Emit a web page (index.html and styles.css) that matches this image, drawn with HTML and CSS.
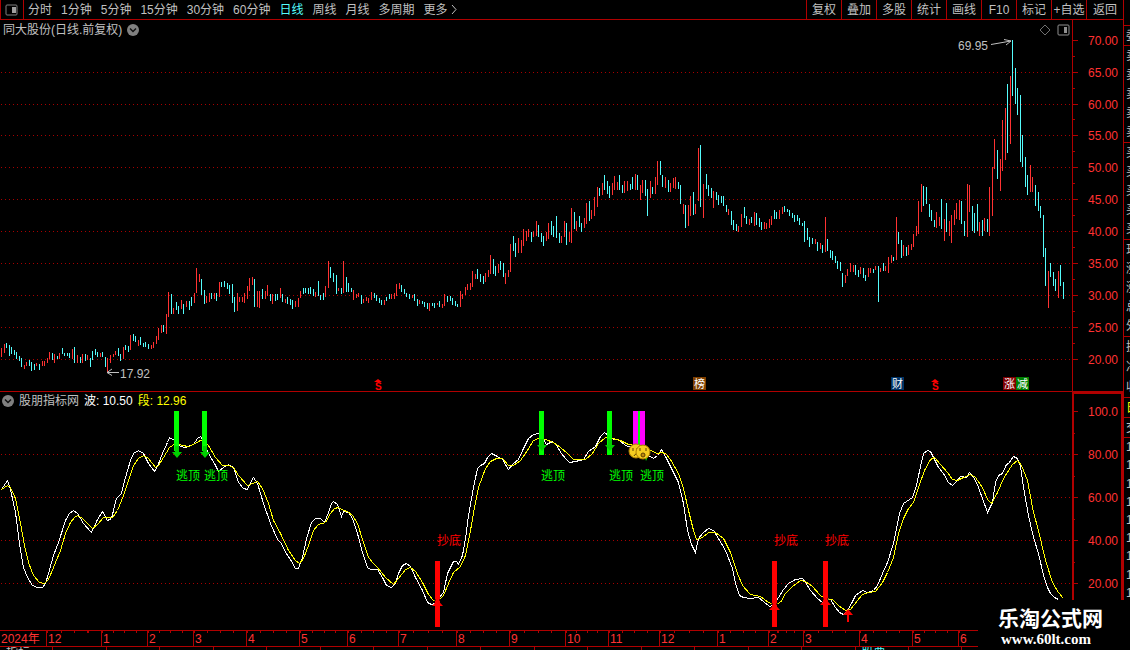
FILE: index.html
```
<!DOCTYPE html>
<html lang="zh-CN">
<head>
    <meta charset="UTF-8">
    <meta name="viewport" content="width=device-width, initial-scale=1.0">
    <title>同大股份 日线</title>
    <link rel="stylesheet" href="styles.css">
</head>
<body>
    <div class="terminal">
        <header class="toolbar">
            <button class="panel-toggle" aria-label="侧栏">
                <svg width="14" height="12" viewBox="0 0 14 12"><rect x="1" y="1" width="11" height="10" rx="1" fill="none" stroke="#808080"/><rect x="7" y="3" width="4" height="6" fill="#a0a0a0"/></svg>
            </button>
            <nav class="periods">
                <button>分时</button>
                <button>1分钟</button>
                <button>5分钟</button>
                <button>15分钟</button>
                <button>30分钟</button>
                <button>60分钟</button>
                <button class="active">日线</button>
                <button>周线</button>
                <button>月线</button>
                <button>多周期</button>
                <button class="more">更多<svg width="6" height="11" viewBox="0 0 6 11"><path d="M1 1l4 4.500-4 4.500" fill="none" stroke="#c0c0c0"/></svg></button>
            </nav>
            <nav class="tools">
                <button>复权</button>
                <button>叠加</button>
                <button>多股</button>
                <button>统计</button>
                <button>画线</button>
                <button>F10</button>
                <button>标记</button>
                <button>+自选</button>
                <button>返回</button>
            </nav>
        </header>

        <!-- Price chart -->
        <section class="pane price-pane">
            <div class="plot">
                <div class="pane-title">
                    <span>同大股份(日线.前复权)</span>
                    <button class="round" aria-label="展开"><svg width="12" height="12" viewBox="0 0 12 12"><circle cx="6" cy="6" r="6" fill="#808080"/><path d="M3 4.500l3 3 3-3" fill="none" stroke="#101010" stroke-width="1.500"/></svg></button>
                </div>
                <div class="pane-icons">
                    <svg width="12" height="12" viewBox="0 0 12 12"><path d="M6 1l5 5-5 5-5-5z" fill="none" stroke="#707070"/></svg>
                    <svg width="13" height="12" viewBox="0 0 13 12"><rect x="1" y="1" width="11" height="10" rx="1" fill="none" stroke="#909090"/><rect x="7" y="3" width="3" height="6" fill="#909090"/></svg>
                </div>
                <svg class="chart" viewBox="0 20 1072 371">
                    <path class="grid" d="M1 72.500H1072M1 104.500H1072M1 135.500H1072M1 167.500H1072M1 199.500H1072M1 231.500H1072M1 263.500H1072M1 295.500H1072M1 327.500H1072M1 359.500H1072"/>
                    <g transform="translate(.5 0)">
                        <path class="up" d="M1 348V357M4 344V353M24 365V369M26 362V366M36 363V366M42 361V366M44 361V366M47 358V363M49 352V359M54 354V363M59 353V359M72 349V359M77 355V363M82 354V363M87 355V360M100 353V357M107 358V372M110 355V363M113 354V357M115 351V355M123 347V359M130 335V350M138 340V346M151 345V349M153 342V348M156 336V344M158 328V340M161 325V333M166 314V334M168 292V317M173 308V314M181 300V309M186 301V307M194 293V303M196 268V293M199 274V282M206 296V303M209 293V302M214 293V299M219 282V297M237 293V311M239 297V302M242 297V302M244 293V303M247 286V299M249 278V291M252 277V285M257 291V307M259 291V308M265 291V299M267 285V296M272 294V304M280 288V298M285 299V303M295 301V307M298 298V307M300 291V298M315 292V297M325 286V297M328 261V288M338 288V291M343 261V293M353 290V300M356 294V298M358 293V297M363 299V303M366 297V301M368 298V303M371 292V300
                            M384 300V305M391 294V299M394 293V299M396 284V296M399 283V289M412 295V298M419 300V304M429 303V311M437 303V305M442 304V308M444 294V306M460 291V307M462 294V299M465 287V295M467 284V290M470 283V290M472 271V287M475 274V279M485 273V282M488 270V277M490 255V274M498 264V273M505 273V284M508 270V277M510 244V272M518 238V253M521 240V253M523 229V246M526 231V241M528 229V237M533 231V237M536 221V236M546 232V241M548 223V239M561 236V243M564 221V237M569 232V242M571 208V243M576 221V231M584 218V228M586 203V224M591 210V219M594 197V216M597 187V207M602 183V195M612 183V195M614 176V190M617 182V190M624 181V193M627 181V191M635 174V190M640 185V200M642 180V193M650 181V198M655 177V194M657 161V185M665 177V188M670 183V192M673 178V188M675 177V189M683 204V214M688 205V226M690 196V216M695 204V214M698 148V201M703 184V218M713 191V208M728 209V215M738 226V232M741 214V227M749 219V225
                            M754 212V226M764 222V229M766 223V229M769 219V228M771 216V225M779 210V219M782 207V214M815 239V244M820 243V249M825 217V252M845 275V283M847 269V276M850 263V272M853 265V272M860 267V274M868 268V277M870 268V273M875 266V270M880 268V272M885 266V271M888 257V273M891 255V263M896 217V260M903 245V256M908 245V255M911 244V250M913 234V247M916 226V236M918 201V234M921 184V212M936 212V228M939 217V226M944 219V241M949 221V236M951 215V243M954 210V225M956 203V219M959 200V220M967 184V237M969 185V212M979 222V236M984 218V231M989 187V236M992 167V216M994 139V169M1000 159V191M1002 120V171M1005 108V160M1010 76V144M1030 165V192M1032 177V192M1048 271V308M1058 271V298"/>
                        <path class="down" d="M6 343V348M9 345V356M11 347V354M14 350V355M16 352V359M19 356V361M21 358V367M29 360V366M31 362V371M34 364V370M39 364V370M52 353V360M57 356V359M62 348V354M64 353V356M67 353V356M69 353V358M74 347V363M80 357V363M85 354V361M90 358V367M92 351V360M95 349V355M97 352V357M102 352V357M105 357V367M118 348V356M120 354V361M125 345V350M128 346V352M133 334V341M135 336V342M140 337V345M143 343V347M145 342V347M148 344V349M163 325V332M171 294V314M176 302V310M178 306V314M183 304V314M189 301V310M191 297V306M201 279V295M204 290V304M211 293V299M216 293V301M221 282V287M224 281V287M227 283V289M229 285V294M232 284V303M234 297V312M254 279V307M262 289V299M270 294V301M275 294V301M277 294V300M282 294V302M287 297V304M290 299V305M292 300V309M303 288V294M305 288V293M308 288V294M310 287V294M313 289V296M318 281V296M320 295V300M323 293V300M330 267V278M333 273V282M336 275V294M341 288V294M346 277V292M348 283V292M351 288V292M361 295V304M374 293V298M376 295V301M379 298V303
                            M381 300V305M386 297V301M389 294V299M401 285V292M404 289V294M406 293V297M409 294V299M414 294V301M417 299V306M422 301V304M424 302V307M427 303V309M432 303V306M434 303V308M439 301V307M447 296V302M450 296V301M452 298V305M455 301V306M457 304V307M477 269V279M480 274V282M483 276V284M493 259V274M495 266V276M500 261V270M503 263V277M513 236V251M515 243V257M531 232V242M538 225V237M541 233V242M543 236V246M551 221V235M553 226V237M556 216V238M559 233V243M566 223V245M574 212V229M579 216V227M581 223V232M589 201V221M599 188V196M604 175V190M607 181V194M609 186V198M619 175V190M622 185V193M630 184V190M632 177V189M637 175V190M645 180V196M647 189V216M652 187V194M660 161V175M662 175V187M668 180V192M678 182V189M680 185V204M685 205V228M693 192V215M700 145V207M706 174V189M708 185V196M711 188V198M716 192V200M718 195V205M721 196V203M723 196V206M726 205V212M731 211V225M733 220V230M736 224V231M744 207V218M746 216V224
                            M751 217V223M756 213V225M759 218V227M761 222V230M774 210V219M776 212V219M784 206V212M787 209V212M789 210V216M792 213V218M794 215V222M797 215V221M799 218V225M802 223V226M804 221V242M807 228V240M809 237V247M812 238V244M817 242V251M822 245V253M827 239V251M830 250V258M832 251V260M835 256V263M837 261V269M840 262V271M842 273V287M855 265V275M858 270V277M863 268V278M865 275V281M873 269V273M878 266V302M883 263V271M893 257V261M898 232V244M901 240V258M906 247V256M923 186V206M926 187V204M929 204V217M931 210V221M934 220V227M941 199V229M946 203V232M961 201V224M964 221V236M972 206V231M974 213V233M977 204V231M982 220V236M987 219V232M997 150V179M1007 84V153M1012 40V96M1015 68V104M1017 88V115M1020 95V162M1022 135V167M1025 157V187M1027 175V195M1035 185V206M1038 192V211M1040 206V218M1043 215V257M1045 248V286M1050 263V277M1053 272V286M1055 279V291M1060 265V286M1063 282V299"/>
                    </g>
                    <path class="pointer" d="M119 372.500H107M112 369l-5 3.500 5 3M991 44.500L1011 41M1004 39.500l7 1.500-5 4"/>
                    <text class="note" x="120" y="378">17.92</text>
                    <text class="note" x="958" y="50">69.95</text>
                    <g class="event">
                        <path d="M374 382l4-3 4 3zM931 382l4-3 4 3z"/>
                        <text x="375" y="390">S</text>
                        <text x="932" y="390">S</text>
                    </g>
                    <g class="badge">
                        <rect x="693" y="377" width="13" height="13" fill="#804000"/>
                        <rect x="891" y="377" width="13" height="13" fill="#003366"/>
                        <rect x="1003" y="377" width="13" height="13" fill="#800000"/>
                        <rect x="1016" y="377" width="13" height="13" fill="#008000"/>
                        <text x="694" y="388">榜</text>
                        <text x="892" y="388">财</text>
                        <text x="1004" y="388">涨</text>
                        <text x="1017" y="388">减</text>
                    </g>
                </svg>
            </div>
            <svg class="scale" viewBox="0 20 51 371">
                <path class="ticks" d="M0 40.500h6M0 72.500h6M0 104.500h6M0 135.500h6M0 167.500h6M0 199.500h6M0 231.500h6M0 263.500h6M0 295.500h6M0 327.500h6M0 359.500h6M0 56.500h3M0 88.500h3M0 119.500h3M0 151.500h3M0 183.500h3M0 215.500h3M0 247.500h3M0 279.500h3M0 311.500h3M0 343.500h3"/>
                <g class="labels">
                    <text x="46" y="45">70.00</text>
                    <text x="46" y="77">65.00</text>
                    <text x="46" y="109">60.00</text>
                    <text x="46" y="140">55.00</text>
                    <text x="46" y="172">50.00</text>
                    <text x="46" y="204">45.00</text>
                    <text x="46" y="236">40.00</text>
                    <text x="46" y="268">35.00</text>
                    <text x="46" y="300">30.00</text>
                    <text x="46" y="332">25.00</text>
                    <text x="46" y="364">20.00</text>
                </g>
            </svg>
        </section>

        <!-- Indicator chart -->
        <section class="pane indicator-pane">
            <div class="plot">
                <div class="pane-title">
                    <button class="round" aria-label="展开"><svg width="12" height="12" viewBox="0 0 12 12"><circle cx="6" cy="6" r="6" fill="#808080"/><path d="M3 4.500l3 3 3-3" fill="none" stroke="#101010" stroke-width="1.500"/></svg></button>
                    <span>股朋指标网</span>
                    <span class="wave">波: 10.50</span>
                    <span class="segment">段: 12.96</span>
                </div>
                <svg class="chart" viewBox="0 392 1072 238">
                    <path class="grid" d="M1 454.500H1072M1 497.500H1072M1 540.500H1072M1 583.500H1072"/>
                    <g transform="translate(.5 .5)">
                        <polyline class="line-wave" points="1,489 7,480 10,489 15,512 19,543 23,567 27,577 32,585 37,587 42,587 45,583 48,573 53,555 58,542 65,520 69,513 73,510 77,513 83,523 91,532 97,519 102,511 107,520 111,518 116,498 121,493 125,477 130,460 133,453 138,450 143,453 148,463 154,471 157,466 162,453 167,442 169,437 174,440 180,446 185,447 193,444 197,438 200,436 203,440 208,453 214,463 218,471 223,467 228,464 233,467 238,482 243,488 247,489 250,482 253,477 257,483 263,503 270,523 277,539 281,543 285,552 290,559 295,568 298,568 302,557 306,538 311,522 315,518 320,518 324,522 328,512 331,503 333,501 337,504 341,516 343,511 348,512 352,518 357,533 362,552 367,567 370,569
                            377,569 382,577 386,585 391,587 395,583 398,573 402,565 406,563 410,566 415,577 422,590 427,602 431,604 435,603 438,598 443,592 447,573 453,561 456,561 458,564 462,555 465,538 468,515 473,487 477,468 480,465 484,463 487,457 491,453 497,456 502,459 508,469 513,463 518,459 523,448 528,438 533,434 538,433 542,437 546,444 552,441 556,445 561,453 565,458 569,462 575,461 583,459 588,451 595,446 600,436 604,432 608,435 613,439 618,439 625,445 632,447 640,450 648,455 653,458 657,455 661,449 665,456 672,470 678,482 683,503 687,530 691,544 695,552 698,538 703,532 708,528 713,530 718,538 725,550 732,568 735,583 739,595 743,597 750,598
                            758,597 763,601 769,606 773,605 778,597 783,589 788,583 795,579 802,578 805,582 810,590 817,598 822,602 826,599 830,599 835,607 839,612 843,614 847,610 852,601 855,595 862,590 867,592 873,590 877,585 882,573 887,562 893,543 896,528 899,513 903,503 912,497 916,485 920,466 923,453 927,450 930,451 933,457 938,467 943,473 948,482 952,485 956,481 960,476 966,477 969,472 974,478 978,487 982,498 987,512 992,502 995,482 998,475 1002,473 1006,464 1008,463 1013,456 1017,458 1020,466 1023,487 1028,515 1033,537 1038,553 1043,575 1047,587 1050,593 1054,597 1058,599"/>
                        <polyline class="line-segment" points="1,489 7,485 10,487 15,498 20,523 24,545 28,562 33,575 39,582 44,583 48,579 53,567 60,550 65,533 70,522 74,517 77,515 82,518 87,523 92,528 97,524 103,517 112,517 117,510 123,495 128,480 133,465 138,458 143,455 148,458 155,467 158,465 163,457 169,447 175,443 182,445 188,446 193,444 200,440 203,439 208,445 215,457 222,465 228,465 233,467 238,475 247,485 252,483 257,481 262,488 268,503 273,520 280,533 288,550 295,560 299,563 303,558 308,545 313,530 318,524 325,522 330,513 334,508 338,507 343,510 347,511 352,515 357,523 363,542 368,557 373,563
                            377,567 385,577 393,584 398,578 405,569 410,567 415,571 422,582 428,594 433,600 438,600 443,595 448,583 453,572 460,566 465,555 470,530 474,507 478,487 485,468 490,461 496,458 502,458 508,465 513,465 520,460 527,450 533,440 540,437 545,439 553,442 560,447 567,453 573,459 585,459 592,453 598,443 605,437 612,438 620,440 628,444 640,446 650,450 657,453 661,452 665,453 670,459 678,473 683,488 688,510 693,530 696,539 702,537 708,532 715,532 723,538 730,552 737,573 742,585 750,594
                            760,596 768,602 774,604 780,602 785,593 792,586 800,580 805,581 812,586 820,595 825,598 832,599 838,605 845,610 850,609 857,600 862,594 868,592 875,591 882,582 887,572 893,557 898,533 903,518 908,508 913,502 918,487 924,470 930,459 934,457 940,464 947,472 952,479 957,480 963,477 970,474 975,477 982,487 987,499 991,503 997,492 1003,478 1012,464 1017,460 1021,465 1027,480 1033,512 1038,530 1045,560 1052,582 1058,592 1063,598"/>
                    </g>
                    <!-- Sell signals -->
                    <g class="sell">
                        <path d="M174 411h5v40h-5zM202 411h5v40h-5zM539 411h5v44h-5zM607 411h5v44h-5z"/>
                        <path class="sell-arrow" d="M175 446h4v6h3l-5 6-5-6h3zM203 446h4v6h3l-5 6-5-6h3zM540 439h4v6h3l-5 6-5-6h3zM608 439h4v6h3l-5 6-5-6h3z"/>
                        <path class="top-bar" d="M633 411h12v34h-12z"/>
                        <path d="M638 411h2v34h-2zM645 457l4-3-3 7z"/>
                        <text x="176" y="480">逃顶</text>
                        <text x="204" y="480">逃顶</text>
                        <text x="541" y="480">逃顶</text>
                        <text x="609" y="480">逃顶</text>
                        <text x="640" y="480">逃顶</text>
                    </g>
                    <g class="face">
                        <circle cx="636" cy="451" r="7"/>
                        <path d="M633 448v3M637 448v3M634 456q2-4 4 0"/>
                        <circle cx="643" cy="452" r="7"/>
                        <path d="M640 448v3M646 448v3"/>
                        <ellipse class="mouth" cx="643" cy="455" rx="2" ry="2"/>
                    </g>
                    <!-- Buy signals -->
                    <g class="buy">
                        <path d="M435 561h5v66h-5zM772 561h5v66h-5zM823 561h5v66h-5z"/>
                        <path d="M432 606l5.500-6 5.500 6zM769 610l5.500-6 5.500 6zM820 605l5.500-6 5.500 6zM843 615l5-6 5 6h-4v7h-2v-7z"/>
                        <path class="notch" d="M434 600h2M439 600h2M771 604h2M776 604h2M822 599h2M827 599h2"/>
                        <text x="437" y="545">抄底</text>
                        <text x="774" y="545">抄底</text>
                        <text x="825" y="545">抄底</text>
                    </g>
                </svg>
            </div>
            <svg class="scale" viewBox="0 392 51 238">
                <path class="ticks" d="M0 411.500h6M0 454.500h6M0 497.500h6M0 540.500h6M0 583.500h6M0 433.500h3M0 476.500h3M0 519.500h3M0 562.500h3"/>
                <path class="frame" d="M1 630V392M0 392.500H51M50 392V630"/>
                <g class="labels">
                    <text x="46" y="416">100.0</text>
                    <text x="46" y="459">80.00</text>
                    <text x="46" y="502">60.00</text>
                    <text x="46" y="545">40.00</text>
                    <text x="46" y="588">20.00</text>
                </g>
            </svg>
        </section>

        <ol class="months">
            <li>2024年</li>
            <li>12</li>
            <li>1</li>
            <li>2</li>
            <li>3</li>
            <li>4</li>
            <li>5</li>
            <li>6</li>
            <li>7</li>
            <li>8</li>
            <li>9</li>
            <li>10</li>
            <li>11</li>
            <li>12</li>
            <li>1</li>
            <li>2</li>
            <li>3</li>
            <li>4</li>
            <li>5</li>
            <li>6</li>
        </ol>
        <!-- Only the top edge of the tab row fits in the window -->
        <div class="tabs">
            <i>指标</i><i></i><i></i><i></i><i></i><i></i><i></i><i></i><i></i><i></i><i></i><i></i><i></i><i></i><i></i><i></i><i class="active">股票</i><i></i><i></i><i></i><i></i>
        </div>
    </div>

    <!-- Quote column, mostly cut off by the window edge -->
    <aside class="quotes">
        <div class="cell head"></div>
        <div class="cell"><span>委</span></div>
        <div class="cell five"><span>卖</span><span>卖</span><span>卖</span><span>卖</span><span>卖</span></div>
        <div class="cell five"><span>买</span><span>买</span><span>买</span><span>买</span><span>买</span></div>
        <div class="cell five"><span>现</span><span>涨</span><span>涨</span><span>总</span><span>外</span></div>
        <div class="cell three"><span>换</span><span>净</span><span>收</span></div>
        <div class="cell yellow"><span>日</span></div>
        <div class="cell"><span>交</span></div>
        <div class="cell trades"><span>1</span><span>1</span><span>1</span><span>1</span><span>1</span><span>1</span><span>1</span><span>1</span><span>1</span></div>
    </aside>

    <div class="site-mark">
        <strong>乐淘公式网</strong>
        <a href="#">www.60lt.com</a>
    </div>
</body>
</html>
```

FILE: styles.css
```
* {
    box-sizing: border-box;
}
body {
    position: relative;
    display: flex;
    min-height: 100vh;
    margin: 0;
    overflow: hidden;
    background-color: #000;
    color: #c0c0c0;
    font-family: "Liberation Sans", "Noto Sans CJK SC", sans-serif;
    font-size: 12px;
    line-height: 18px;
}
button {
    padding: 0;
    border: 0;
    background: none;
    color: inherit;
    font: inherit;
    white-space: nowrap;
}
svg {
    display: block;
}
svg text {
    font-size: 12px;
}
.terminal {
    flex: 1;
    min-width: 0;
}

/* Toolbar */
.toolbar {
    display: flex;
    height: 20px;
    border-bottom: 1px solid #b00000;
    border-left: 1px solid #b00000;
}
.panel-toggle {
    display: flex;
    align-items: center;
    justify-content: center;
    width: 23px;
    border-right: 1px solid #b00000;
}
.periods {
    display: flex;
    flex: 1;
    gap: 9px;
    padding-left: 4px;
}
.periods .active {
    color: #54fcfc;
}
.periods .more {
    display: flex;
    align-items: center;
    gap: 3px;
}
.tools {
    display: flex;
}
.tools button {
    width: 35px;
    border-left: 1px solid #b00000;
}
.tools button:last-child {
    width: 37px;
}

/* Chart panes */
.pane {
    display: flex;
    border-bottom: 1px solid #b00000;
}
.plot {
    position: relative;
    flex: 1072;
    min-width: 0;
}
.chart {
    width: 100%;
}
.scale {
    flex: 51;
    min-width: 0;
}
.price-pane .scale {
    background: linear-gradient(#b00000, #b00000) left / 1px 100% no-repeat;
}
.pane-title {
    position: absolute;
    top: 0;
    left: 2px;
    display: flex;
    align-items: center;
    gap: 5px;
}
.price-pane .pane-title {
    top: 1px;
    left: 3px;
}
.pane-icons {
    position: absolute;
    top: 4px;
    right: 2px;
    display: flex;
    gap: 6px;
}
.wave {
    color: #fff;
}
.segment {
    color: #ff0;
}
.grid {
    stroke: #a80000;
    stroke-dasharray: 1 3;
}
.up {
    stroke: #ff3232;
}
.down {
    stroke: #54fcfc;
}
.grid, .up, .down, .ticks, .frame {
    fill: none;
    shape-rendering: crispEdges;
}
.pointer {
    fill: none;
    stroke: #c0c0c0;
}
.note {
    fill: #c0c0c0;
}
.event {
    fill: #f00;
}
.event text {
    font-size: 10px;
    font-weight: bold;
}
.badge text {
    fill: #fff;
    font-size: 11px;
}
.ticks {
    stroke: #b00000;
}
.frame {
    stroke: #b00000;
    stroke-width: 2;
}
.labels {
    fill: #ff3232;
    text-anchor: end;
}
.line-wave, .line-segment {
    fill: none;
    stroke: #fff;
    shape-rendering: crispEdges;
}
.line-segment {
    stroke: #ff0;
}
.sell {
    fill: #0f0;
}
.sell-arrow {
    fill: #00d000;
}
.top-bar {
    fill: #f0f;
}
.face circle {
    fill: #f4cc20;
    stroke: #b08000;
}
.face path, .mouth {
    fill: none;
    stroke: #5a4000;
}
.mouth {
    fill: #c08a10;
}
.buy {
    fill: #f00;
}
.notch {
    stroke: #000;
}

/* Time axis */
.months {
    display: grid;
    grid-template-columns: 46fr 55fr 46fr 46fr 53fr 53fr 48fr 51fr 58fr 53fr 56fr 43fr 51fr 58fr 51fr 35fr 56fr 53fr 46fr 165fr;
    height: 16px;
    margin: 0;
    padding: 0;
    border-bottom: 1px solid #b00000;
    color: #ff3232;
    line-height: 16px;
    list-style: none;
}
.months li {
    min-width: 0;
    padding-left: 1px;
    border-left: 1px solid #b00000;
    background: repeating-linear-gradient(to right, #b00000 0 1px, transparent 1px 25%) top / 100% 2px no-repeat;
    white-space: nowrap;
}
.months li:first-child {
    border-left: 0;
    background: none;
}
.tabs {
    display: flex;
    height: 3px;
    overflow: hidden;
    line-height: 12px;
}
.tabs i {
    flex: 1;
    min-width: 0;
    padding-left: 6px;
    border-right: 1px solid #b00000;
    font-style: normal;
}
.tabs .active {
    color: #54fcfc;
}

/* Quote column */
.quotes {
    width: 7px;
    overflow: hidden;
    border-left: 1px solid #b00000;
}
.cell {
    display: flex;
    flex-direction: column;
    justify-content: space-around;
    height: 20px;
    padding-left: 2px;
    border-bottom: 1px solid #b00000;
}
.cell.head {
    height: 26px;
}
.cell.five {
    height: 97px;
}
.cell.three {
    height: 61px;
}
.cell.yellow {
    color: #ff0;
}
.cell.trades {
    height: 164px;
    border-bottom: 0;
}

/* Site mark in the corner */
.site-mark {
    position: absolute;
    right: 0;
    bottom: 0;
    display: flex;
    flex-direction: column;
    width: 152px;
    height: 50px;
    padding: 8px 0 0 20px;
    background-color: #000;
    color: #fff;
}
.site-mark strong {
    font-size: 21px;
    line-height: 22px;
}
.site-mark a {
    padding-left: 3px;
    color: #fff;
    font-family: "Liberation Serif", serif;
    font-size: 15px;
    font-weight: bold;
    text-decoration: none;
}
```
